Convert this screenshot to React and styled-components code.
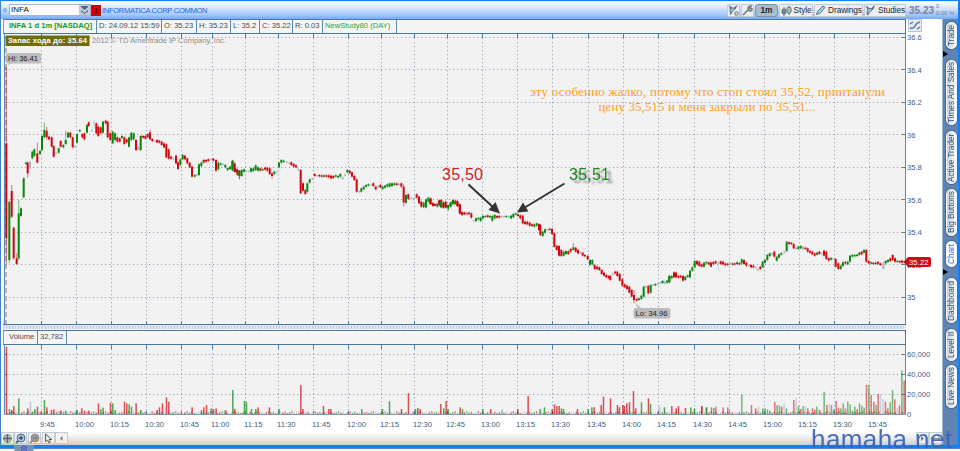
import React from 'react'
import styled, { createGlobalStyle } from 'styled-components'

const GlobalStyle = createGlobalStyle`
    * {
        box-sizing: border-box;
    }
    body {
        margin: 0;
        background: #fff;
        font-family: "Liberation Sans", Arial, sans-serif;
        font-size: 7.6px;
        color: #4a4a4a;
        overflow: hidden;
    }
`

const Window = styled.div`
    position: relative;
    display: flex;
    flex-direction: column;
    width: 960px;
    height: 451px;
    overflow: hidden;
`

const Frame = styled.div`
    display: flex;
    flex-direction: column;
    height: 448px;
    border: solid #0f80f8;
    border-width: 1px 2px 3px 1px;
    border-left-color: #3f7fd0;
`

const TopBar = styled.div`
    display: flex;
    align-items: center;
    height: 18px;
    padding-left: 2px;
    background: linear-gradient(#d6ebff 0, #fafcff 8%, #d5e5fd 40%, #a6c9fb 75%, #75abf8 100%);
`

const LinkDot = styled.span`
    width: 4px;
    height: 4px;
    margin-right: 2px;
    border: 1px solid #5aa0ee;
    border-radius: 50%;
`

const SymbolInput = styled.div`
    display: flex;
    justify-content: space-between;
    width: 82px;
    height: 12px;
    padding-left: 1px;
    border: 1px solid #a9b5c4;
    background: #fbfbfb;
    color: #111;
    font-size: 8px;
    line-height: 10px;
`

const DropIcon = styled.svg`
    width: 11px;
    height: 10px;
    background: #c3ccd6;
`

const LinkBadge = styled.span`
    width: 10px;
    height: 11px;
    background: #d80008;
    border: 1px solid #9d1a1a;
    color: #3d0000;
    text-align: center;
    line-height: 9px;
`

const CompanyName = styled.span`
    flex: 1;
    padding-left: 1px;
    color: #1264e6;
    font-size: 7.6px;
    letter-spacing: -0.33px;
`

const ToolButton = styled.div`
    display: flex;
    align-items: center;
    justify-content: center;
    gap: 2px;
    width: ${props => props.$width}px;
    height: 13px;
    margin-right: 1px;
    border: 1px solid #c3c9d2;
    background: ${props => (props.$pressed ? '#a9bccb' : '#eceef1')};
    border-radius: ${props => (props.$pressed ? '3px' : '1px')};
    border-color: ${props => (props.$pressed ? '#7d94a8' : '#c3c9d2')};
    color: #202830;
    font-size: 8.3px;
    font-weight: ${props => (props.$pressed ? 'bold' : 'normal')};
    letter-spacing: -0.1px;
    white-space: nowrap;
`

const LastPrice = styled.span`
    width: 29px;
    padding-left: 2px;
    color: #76839a;
    font-size: 10px;
    font-weight: bold;
`

const Change = styled.div`
    width: 22px;
    color: #6f7f98;
    font-size: 6px;
    line-height: 7px;
    white-space: nowrap;
`

const Body = styled.div`
    display: flex;
    flex: 1;
    min-height: 0;
`

const Main = styled.div`
    display: flex;
    flex-direction: column;
    width: 941px;
    padding-left: 2px;
    background: #fff;
`

const StudyBar = styled.div`
    display: flex;
    align-items: center;
    width: 903px;
    height: ${props => props.$height}px;
    border: 1px solid #4b79a3;
    border-left-color: #7fa0bd;
    background: #f5f5f5;
`

const StudyRow = styled.div`
    display: flex;
    justify-content: space-between;
    height: ${props => props.$height}px;
`

const StudyCell = styled.span`
    width: ${props => props.$width}px;
    height: 100%;
    padding-left: ${props => props.$pad || 2}px;
    border-right: 1px solid #5c87ae;
    color: ${props => props.$color || '#4c4c4c'};
    font-weight: ${props => (props.$bold ? 'bold' : 'normal')};
    line-height: 12px;
    white-space: nowrap;
`

const ScaleButton = styled.div`
    width: 14px;
    height: 13px;
    margin-right: 20px;
    border: 1px solid #b7c4d3;
    background: #e6ebf1;
`

const ChartSvg = styled.svg`
    display: block;
    width: 939px;
    height: ${props => props.$height}px;
    flex: none;
    font-size: 7.6px;
`

const ShadowText = styled.text`
    filter: drop-shadow(4px 3px 1px rgba(70, 70, 70, 0.6));
`

const Splitter = styled.div`
    width: 903px;
    height: 5px;
    border-top: 1px solid #dfe6f1;
    background: repeating-linear-gradient(90deg, #b9c7dc 0 1px, #e1e8f3 1px 3px);
    border-bottom: 1px solid #f3f5f9;
`

const BottomBar = styled.div`
    display: flex;
    flex: 1;
    margin-left: -2px;
    background: linear-gradient(#fff, #ececec 45%, #cfcfcf);
`

const BottomButton = styled.div`
    display: flex;
    align-items: center;
    justify-content: center;
    width: 13px;
    height: 12px;
    margin-right: ${props => props.$gap || 0}px;
    border: 1px solid #c2ccd9;
    background: #f0f1f2;
`

const Spacer = styled.div`
    flex: 1;
`

const SideBar = styled.div`
    display: flex;
    flex-direction: column;
    align-items: flex-end;
    width: 16px;
    padding: 3px 1px 0 0;
    background: #5f84b3;
    border-left: 1px solid #a9b9cc;
`

const SideTab = styled.div`
    display: flex;
    align-items: center;
    justify-content: center;
    flex: none;
    width: 11px;
    height: ${props => props.$height}px;
    margin-bottom: ${props => props.$gap}px;
    border: 1px solid #f5f6f8;
    border-radius: 5px;
    background: linear-gradient(90deg, ${props => (props.$active ? '#fff, #fff' : '#fbfbfb, #cdd1d6')});
    box-shadow: 0 0 0 1px #46698f;
    color: ${props => (props.$active ? '#2f6fe0' : '#2d5378')};
    font-size: 8.2px;
    line-height: 9px;
    writing-mode: vertical-rl;
    transform: rotate(180deg);
    white-space: nowrap;
`

const SideArrow = styled.div`
    align-self: flex-start;
    height: 6px;
    margin: 2px 0 3px;
    border: solid transparent;
    border-width: 3px 0 3px 5px;
    border-left-color: #000;
`

const BottomEdge = styled.div`
    height: 3px;
    background: linear-gradient(#5f86bd 0 1px, #f4f7fb 1px);
`

const PullTab = styled.div`
    position: absolute;
    left: 14px;
    bottom: 0;
    display: flex;
    justify-content: center;
    width: 20px;
    height: 6px;
    background: #7790b4;
    border-radius: 0 0 2px 2px;
`

const Watermark = styled.div`
    position: absolute;
    left: 811px;
    top: 424px;
    color: #3d61b8;
    opacity: 0.92;
    font-size: 26px;
    line-height: 30px;
    letter-spacing: 0.42px;
`

const GRID_X = [41, 76, 111, 146, 181, 212, 245, 278, 313, 348, 381, 414, 447, 482, 517, 552, 588, 623, 658, 694, 729, 764, 799, 834, 869]
const TIMES = ['9:45', '10:00', '10:15', '10:30', '10:45', '11:00', '11:15', '11:30', '11:45', '12:00', '12:15', '12:30', '12:45', '13:00', '13:15', '13:30', '13:45', '14:00', '14:15', '14:30', '14:45', '15:00', '15:15', '15:30', '15:45']
const PRICES = [['36.6', 37], ['36.4', 69.5], ['36.2', 102], ['36', 134.5], ['35.8', 167], ['35.6', 199.5], ['35.4', 232], ['35.2', 264.5], ['35', 297]]
const VOLUMES = [['60,000', 354], ['40,000', 374], ['20,000', 394]]

const COLORS = { r: '#cf0810', g: '#0a870f', n: '#a9b4c1' }

// candle: color, x, body top, body bottom, [high, low]; units are thirds of a pixel
const CANDLES = [
    [0, 50, `r19 280 565 50 645,g28 455 630 455 640,r35 423 500 405 505,r41 533 625,r50 625 642 610 645,g56 490 625 450 630,g63 475 498,g71 385 442,g78 338 342,r83 338 370 335 382,n90 335 355,g97 305 325,g103 298 318,r112 310 338 278 340,g120 303 312,g126 258 300,g133 240 262 218 264,r140 242 262 230 268,r147 260 268,r155 262 290,r161 288 320,n168 308 311,g176 295 308,r182 273 290,g190 285 292,g197 270 282 242 285,g204 248 262,r211 248 262,r218 262 292,n225 289 292,g231 252 278,g239 240 244,r247 253 262,r253 250 268,g261 225 248,r266 217 228,n275 241 244,n282 217 220 208 235,r289 220 250,r295 230 258,r302 232 250,g309 215 248,r317 212 220,r323 215 262,r331 250 270,g338 245 280,g345 250 270,r352 262 275,r359 265 275,g366 258 264,r373 262 282,r380 268 277,g387 262 290,g394 248 270,g401 250 268,r408 270 300,n415 290 300,g422 258 300,r429 258 263,r436 258 266,r443 252 262,r450 247 268 239 270,r457 267 273,n464 273 276,r471 270 277,r478 272 278,r485 275 285,r492 280 292,r499 283 322,r506 298 326,r513 320 326,n520 325 329,r528 317 340,r534 337 357,g541 328 345,g548 315 328,r555 317 328,r562 325 340,r569 338 352,r576 350 380,g584 375 380,n590 372 378,g597 343 375,g604 338 348,r611 330 338,r618 330 335,r625 328 333,n632 327 330,r640 326 332,r648 330 362,g655 338 358,g662 340 344,n669 342 345,g676 345 352,g683 354 360,g690 350 357,g697 333 358,r704 340 365,r711 358 366,r718 362 378 360 387`],
    [230, 130, `g8 92 122,r15 115 125,r22 120 134,g28 122 138 120 148,g35 120 138,g42 118 125,n49 122 126,n57 122 125,g63 115 125,g70 115 123,g77 106 120,g84 112 122,r91 115 122,g98 117 121,r105 113 119,r112 113 122,r119 115 132,r126 130 138 127 147,g133 125 132,n140 125 128,g147 98 112,g154 90 98,g161 92 96,n170 95 98,n178 98 101,r184 97 105,r191 102 110,r198 106 112,n205 117 120,r212 120 190,r219 160 182,r226 180 192,g232 160 185,g239 148 158,n247 145 149,r254 132 138,n261 136 139,r268 135 139,r275 136 140,g282 136 140,r289 136 140,r296 136 142,r303 137 145,r310 138 144,g317 136 140,g324 138 142,g331 132 140,n338 142 147,n345 134 138,g352 120 127,r359 122 130,r366 127 140,r373 138 150,r380 148 185,n387 183 187,g394 175 185,g401 170 178,g408 165 170,g415 163 167,n422 163 166,r430 160 168,r437 170 178,n444 168 172,r451 165 172,g458 170 177,g465 167 173,g472 163 170,g479 160 170,g486 160 168,g493 160 165,r500 160 165,n507 161 165,r514 160 170,r521 170 218 163 229,g528 195 218,r535 193 207,n545 204 207,n553 203 206,r560 193 203,r567 200 220,r574 215 230,g581 218 232,g588 208 232,g595 203 215,r602 205 222,r609 220 228,n620 221 224,r627 213 222,r634 210 230,g641 217 232,g648 225 232,g655 228 235 225 243,g662 217 230,r669 210 220,r676 212 220,r683 217 228,r690 225 250,g697 248 255,r704 249 253,r711 249 253`],
    [430, 70, `r1 388 402,r8 400 405,r15 402 407,g22 402 410,r29 390 407,g33 393 412,r40 400 413,r47 395 412,g54 405 415,g61 400 408,g68 393 402,g75 395 402,r82 393 408,r89 403 430,r96 427 433,r103 428 432,n110 427 431,r117 428 432,r124 430 443,n131 451 454,g138 445 453,g145 444 448,g152 443 453,g159 438 445,g166 438 441,r173 436 441,g180 438 442,g187 438 452,g194 435 445,r201 438 443,r208 438 443,n215 438 442,n222 438 441,g229 438 441,n236 438 442,g243 437 445,g250 432 442,g257 430 434,r264 433 438,r271 436 445,r278 437 460,r285 455 462,r292 455 463,r299 458 467,r306 463 468,g313 463 470,g320 460 467,r327 462 480,r331 465 495,g338 485 498,g345 478 488,n352 477 481,r359 476 480,r366 477 492,r373 490 530,r380 527 540,r387 528 557,r394 540 558,g401 545 557,g408 543 552,r415 544 552,r422 537 545,g430 532 540 519 542,r437 533 545,r444 540 550,n451 546 550,r458 548 557,r465 555 559,r473 558 568,g480 570 585,g487 570 583,r494 585 597,r501 590 597,r508 592 600,r515 600 612,r522 608 617,r529 615 622,r536 618 625,r541 618 630,n548 611 615,r555 605 610,r562 605 618,r569 612 632,r577 628 647,r584 643 652,r591 647 657,r598 650 668,r605 660 680,r612 675 690 660 700,r620 687 692,g627 685 690,g634 677 687,g641 650 680,n648 648 652,r655 648 670,g662 645 668,n669 644 647,g676 642 646,n683 640 644,n690 638 641,g697 634 638,n704 636 639,g711 633 637,g718 618 635`],
    [660, 70, `g8 634 638,n15 638 641,g22 633 637,g28 618 637,g35 618 625,r42 607 622,r48 608 622,r55 617 623,r62 617 622,r69 618 632,g76 620 630,g83 616 621,g90 602 622,g97 592 602,g104 573 592,r111 573 583,r118 575 588,r125 583 590,g132 578 590,g139 576 580,r146 577 583,r153 578 590,r160 576 582,r167 574 580,n175 580 583 572 602,r182 574 582,r189 575 583,r196 580 586,r203 581 585,n210 580 583,g217 580 584,r224 580 584,g231 577 582,r238 579 583,g245 568 580,r252 570 582,r259 578 587,n266 585 588,r273 585 592,r280 587 592,n287 591 595,n294 597 601,r301 590 597,g308 575 592,g315 570 578,g322 555 570,g329 550 558,n336 550 554,r343 545 560,g350 560 572,g357 553 563,g364 549 554,n373 544 548,g380 515 543,r387 517 522,r394 518 522,r401 522 535,n408 534 537,g415 530 537,g422 528 535,n429 530 538,r436 533 537,r443 535 545,r450 543 548,r457 545 553,r464 550 557,g471 548 554,r478 545 552,n485 549 552,r492 542 557,r499 545 567,r506 565 572,g513 564 569,n520 565 569,r527 567 590,r535 580 597,g542 587 597,g549 577 588,r556 576 580,g563 575 583,g570 557 575,g577 555 560,g584 555 559,g591 554 558,g598 548 555,r605 545 553,g612 540 548,r619 540 575,r626 573 580,g633 577 581,r640 578 582,r647 578 582,r654 576 581,r661 580 585,n670 578 597,g677 573 580,g684 570 576,r691 565 573,r698 555 570,r705 565 575,g712 572 576,r719 573 577,r726 572 578,g733 574 578`],
]

// volume bar: color, x, height; units are thirds of a pixel
const BARS = [
    [0, 'r19 202,g28 15,r35 12,r41 24,g56 47,r83 17,n91 37,g97 7,g104 15,r112 22,g133 42,r140 20,r154 12,r161 14,r182 10,g197 10,g231 12,r245 17,r253 10,r266 10,r295 32,g302 14,g309 19,r331 34,g338 32,g345 12,r373 37,r380 32,g387 29,g394 22,r408 32,g422 12,r471 12,r478 20,r487 32,r499 50,r506 37,r576 20,g604 12,r611 20,r619 27,g633 17,r640 15,r648 17,r676 12,r704 15'],
    [230, 'g8 72,g43 39,g49 36,g64 15,g77 15,r84 20,r118 20,g147 15,r212 87,r218 15,r280 24,r296 15,r302 15,g395 15,g457 15,g478 38,r514 15,r535 62,g556 15,r563 18,r570 15,r632 30,g641 17,r648 39,g654 15,r690 20,g697 15,g758 15,r782 15,n816 15,r863 15,r894 54,g930 15,g943 20,r966 15,r973 29,r980 24,r987 24,g994 17,g1000 15,r1042 15,g1074 15,g1085 20,r1092 20,r1113 27,r1120 52,r1141 47,r1162 27,r1168 20,r1178 27,r1183 24,r1190 32,r1198 35,r1210 69,r1217 17,g1234 35,r1255 47,g1261 30,n1288 24,g1303 20,r1325 24,r1338 17,r1345 24,r1366 18,g1382 20,g1393 17,r1415 24,g1429 20'],
    [700, 'r5 22,g19 19,r34 20,g41 18,r47 22,r69 20,r83 20,n89 12,g125 58,r154 27,r167 17,n175 22,g188 17,g195 17,g202 14,g209 10,r224 36,g231 27,g238 25,r245 22,n252 32,g259 17,r281 42,n288 47,g295 24,r302 15,g309 24,n316 24,r323 17,r337 17,r344 13,g350 22,r358 13,g372 67,r380 27,n387 32,g394 27,g401 14,r408 39,r415 19,g422 17,g429 32,r436 17,g443 37,g450 29,g457 10,g464 22,r471 14,g478 32,g485 25,g492 19,r499 87,g506 87,r513 57,r521 37,g528 27,r534 60,n541 60,n549 45,r556 37,r563 17,g570 35,g577 72,r584 44,n591 18,r598 25,g605 130,r612 100'],
]

const parse = (text) => text.split(',').map(item => [item[0], ...item.slice(1).split(' ').map(Number)])

const Grid = ({ rows, top, bottom }) => (
    <g stroke="#86a5c2" strokeDasharray="1.2 2.8">
        {rows.map(([label, y]) => <line key={label} x1="5" x2="904" y1={Math.floor(y) + 0.5} y2={Math.floor(y) + 0.5} />)}
        {GRID_X.map(x => <line key={x} x1={x + 0.5} x2={x + 0.5} y1={top} y2={bottom} />)}
        <g stroke="#4f7ea8" strokeDasharray="none">
            {GRID_X.map(x => <line key={x} x1={x + 0.5} x2={x + 0.5} y1={top} y2={top + 4} />)}
            {GRID_X.map(x => <line key={x} x1={x + 0.5} x2={x + 0.5} y1={bottom - 3} y2={bottom} />)}
            {rows.map(([label, y]) => <path key={label} d={`M4 ${Math.floor(y) + 0.5}h3M902 ${Math.floor(y) + 0.5}h4`} />)}
        </g>
    </g>
)

const Candle = ({ data, left, top }) => {
    const [color, x, open, close, high = open - 3, low = close + 3] = data
    const cx = left + x / 3
    return (
        <g fill={COLORS[color]}>
            <rect x={cx - 0.5} y={top + high / 3} width="1.1" height={(low - high) / 3} opacity="0.5" />
            <rect x={cx - 1} y={top + open / 3} width="2" height={Math.max(1, (close - open) / 3)} />
        </g>
    )
}

const Arrow = ({ d, head }) => (
    <g stroke="#333" fill="#333">
        <path d={d} strokeWidth="2" />
        <path d={head} stroke="none" />
    </g>
)

const PriceChart = () => (
    <ChartSvg $height={291} viewBox="3 34 939 291">
        <rect x="3" y="34" width="903" height="291" fill="#f2f2f2" />
        <Grid rows={PRICES} top={34} bottom={324} />
        <path d="M4.5 34V325M905.5 34V325" stroke="#5f8ab0" />
        <path d="M3 324.5H906" stroke="#4a78a2" />
        <path d="M6 48V324" stroke="#b4b8bc" strokeWidth="2" strokeDasharray="5 3" />
        {CANDLES.map(([left, top, text]) => parse(text).map(data => (
            <Candle key={left + data[1]} data={data} left={left} top={top} />
        )))}

        <rect x="5.5" y="35.5" width="84" height="10.5" fill="#6d6d0c" />
        <text x="8" y="43.4" fill="#fff" fontWeight="bold" textLength="79">Запас хода до: 35.64</text>
        <text x="92" y="43.3" fill="#8c8c8c" textLength="134">2012 © TD Ameritrade IP Company, Inc.</text>
        <path d="M7 66l3-5h5z" fill="#c2c2c2" />
        <rect x="6" y="53" width="35" height="10.5" rx="2" fill="#bcbcbc" />
        <text x="8" y="61" fill="#222" textLength="30">Hi: 36.41</text>
        <path d="M635 303l3 6h5z" fill="#c2c2c2" />
        <rect x="633.5" y="308" width="37" height="10.5" rx="2" fill="#bcbcbc" />
        <text x="635.5" y="316" fill="#222" textLength="32">Lo: 34.96</text>

        <g fontSize="16">
            <text x="442" y="180" fill="#c9222b" textLength="41">35,50</text>
            <ShadowText x="569" y="180" fill="#178c1b" textLength="41">35,51</ShadowText>
        </g>
        <Arrow d="M468.5 184.5L494 208" head="M500 213.5L488.5 210L495.5 202z" />
        <Arrow d="M564.5 183.5L524 208" head="M517 212.5L523 202.5L528.5 211.5z" />
        <g fill="#ffa01e" fontSize="13" fontFamily="'Liberation Serif', serif">
            <text x="530" y="96" textLength="355">эту особенно жалко, потому что стоп стоял 35,52, принтанули</text>
            <text x="598.5" y="111" textLength="217">цену 35,515 и меня закрыли по 35,51...</text>
        </g>

        <g fill="#366087">
            {PRICES.map(([label, y]) => <text key={label} x="907" y={y + 3.2}>{label}</text>)}
        </g>
        <path d="M904 262l4-5h21q2 0 2 2v6q0 2-2 2h-21z" fill="#d00812" />
        <text x="909" y="264.8" fill="#fff" textLength="19.5">35.22</text>
    </ChartSvg>
)

const VolumeChart = () => (
    <ChartSvg $height={87} viewBox="3 345 939 87">
        <rect x="3" y="345" width="903" height="70" fill="#f2f2f2" />
        <Grid rows={VOLUMES} top={345} bottom={414} />
        {Array.from({ length: 385 }, (_, i) => (
            <rect key={i} x={7 + i * 2.33} y={413 - (i * 7 % 5) * 0.4} width="1.4" height="2" fill={COLORS['rgnrgrn'[i * 11 % 7]]} opacity="0.6" />
        ))}
        {BARS.map(([left, text]) => parse(text).map(([color, x, height]) => (
            <rect key={left + x} x={left + x / 3 - 0.6} y={414 - height / 3} width="1.5" height={height / 3} fill={COLORS[color]} opacity={left === 700 ? 0.55 : 0.7} />
        )))}
        <path d="M4.5 345V415M905.5 345V415" stroke="#5f8ab0" />
        <path d="M4 414.5H906" stroke="#7898b6" />
        <g fill="#366087">
            {VOLUMES.map(([label, y]) => <text key={label} x="907" y={y + 3.3}>{label}</text>)}
            <text x="907" y="417.3">0</text>
            {TIMES.map((label, i) => <text key={label} x={GRID_X[i] - 1} y="427">{label}</text>)}
        </g>
    </ChartSvg>
)

const ToolIcon = ({ kind }) => (
    <svg width="11" height="11" viewBox="0 0 11 11" fill="none" stroke="#4f7288">
        {kind === 'flask' && <g><path d="M2.500 3.500h6L4.500 7 3 10 2 9.500z" fill="#9fc2d2" /><path d="M1 1.500l3 2M9.500 1L7 3.500" strokeWidth="1.5" /></g>}
        {kind === 'add' && <g><path d="M2 3h6L4.500 6 2.500 9.500z" fill="#9fc2d2" /><path d="M1 1l2.500 2M9 1L6.500 3" strokeWidth="1.5" /><path d="M7 7h3v3H7z" stroke="#6f7f54" /></g>}
        {kind === 'wrench' && <path d="M1 10l6-6M6 4q0-3 3-3l-1 2 2 1q0 3-4 1" stroke="#6c8078" strokeWidth="1.7" />}
        {kind === 'style' && <g><path d="M3 2v9M8 1v9" stroke="#667" /><rect x="1" y="4" width="4" height="5" rx="1.500" fill="#6f8d88" /><rect x="6" y="2" width="4" height="6" rx="1.500" fill="#b5c49b" /></g>}
        {kind === 'pencil' && <path d="M1.500 9.500l1-3L8 1l2 1.500-5.500 6z" fill="#a8cfdc" />}
    </svg>
)

const BottomIcon = ({ kind }) => (
    <svg width="11" height="11" viewBox="0 0 11 11" stroke="#4b6577" fill="none">
        {kind === 'move' && <g><circle cx="5.500" cy="5.500" r="4" fill="#b9c6b4" strokeOpacity="0.5" /><path d="M5.500 1v9M1 5.500h9" strokeWidth="1.4" /></g>}
        {kind === 'zoom' && <g><path d="M1 10l3-3" strokeWidth="2" /><circle cx="6" cy="5" r="4" fill="#a9c8da" /><path d="M6 3v4M4 5h4" stroke="#2f5a88" strokeWidth="1.4" /></g>}
        {kind === 'zoomout' && <g stroke="#909090"><path d="M1 10l3-3" strokeWidth="2" /><circle cx="6" cy="5" r="4" fill="#999" /><path d="M4 5h4" stroke="#777" /></g>}
        {kind === 'cursor' && <path d="M2.500 1v8l2-2 1.500 3 1.500-1-1.500-2.500h3z" fill="#e8f0d8" />}
        {kind === 'left' && <path d="M6.500 3v5L4 5.500z" fill="#777" stroke="none" />}
        {kind === 'right' && <path d="M4 3v5l3-2.500z" fill="#777" stroke="none" />}
        {kind === 'fit' && <path d="M1 5.500h9M3 3L1 5.500 3 8m5-5l2 2.500L8 8" stroke="#8b9862" />}
    </svg>
)

const App = () => {
    return (
        <Window>
            <GlobalStyle />
            <Frame>
                <TopBar>
                    <LinkDot />
                    <SymbolInput>
                        INFA
                        <DropIcon viewBox="0 0 11 10">
                            <path d="M2 1h7v1L5.500 5 2 2zM2 5l3.500 3L9 5v1.500L5.500 9 2 6.500z" fill="#456a8c" />
                        </DropIcon>
                    </SymbolInput>
                    <LinkBadge>1</LinkBadge>
                    <CompanyName>INFORMATICA CORP COMMON</CompanyName>
                    <ToolButton $width={13}><ToolIcon kind="add" /></ToolButton>
                    <ToolButton $width={13}><ToolIcon kind="wrench" /></ToolButton>
                    <ToolButton $width={23} $pressed>1m</ToolButton>
                    <ToolButton $width={34}><ToolIcon kind="style" />Style</ToolButton>
                    <ToolButton $width={49}><ToolIcon kind="pencil" />Drawings</ToolButton>
                    <ToolButton $width={42}><ToolIcon kind="flask" />Studies</ToolButton>
                    <LastPrice>35.23</LastPrice>
                    <Change>0<br />0.00 %</Change>
                </TopBar>
                <Body>
                    <Main>
                        <StudyRow $height={15}>
                            <StudyBar $height={15}>
                                <StudyCell $width={93} $pad={5} $color="#149a20" $bold>INFA 1 d 1m [NASDAQ]</StudyCell>
                                <StudyCell $width={65}>D: 24.09.12 15:59</StudyCell>
                                <StudyCell $width={35}>O: 35.23</StudyCell>
                                <StudyCell $width={34}>H: 35.23</StudyCell>
                                <StudyCell $width={29}>L: 35.2</StudyCell>
                                <StudyCell $width={33}>C: 35.22</StudyCell>
                                <StudyCell $width={30}>R: 0.03</StudyCell>
                                <StudyCell $width={74} $color="#2fa035">NewStudy80 (DAY)</StudyCell>
                            </StudyBar>
                            <ScaleButton>
                                <svg width="12" height="11" viewBox="0 0 12 11">
                                    <path d="M1 8q4 1 5-2t5-4M1 4l3-2M8 9l3-2" stroke="#4c7ea0" strokeWidth="1.4" fill="none" />
                                </svg>
                            </ScaleButton>
                        </StudyRow>
                        <PriceChart />
                        <Splitter />
                        <StudyBar $height={15}>
                            <StudyCell $width={34} $pad={5}>Volume</StudyCell>
                            <StudyCell $width={29}>32,782</StudyCell>
                        </StudyBar>
                        <VolumeChart />
                        <BottomBar>
                            <BottomButton><BottomIcon kind="move" /></BottomButton>
                            <BottomButton $gap={1}><BottomIcon kind="zoom" /></BottomButton>
                            <BottomButton $gap={1}><BottomIcon kind="zoomout" /></BottomButton>
                            <BottomButton><BottomIcon kind="cursor" /></BottomButton>
                            <BottomButton><BottomIcon kind="left" /></BottomButton>
                            <Spacer />
                            <BottomButton><BottomIcon kind="right" /></BottomButton>
                            <BottomButton><BottomIcon kind="fit" /></BottomButton>
                        </BottomBar>
                    </Main>
                    <SideBar>
                        <SideTab $height={27} $gap={0}>Trade</SideTab>
                        <SideArrow />
                        <SideTab $height={65} $gap={6}>Times And Sales</SideTab>
                        <SideTab $height={53} $gap={5}>Active Trader</SideTab>
                        <SideTab $height={47} $gap={5}>Big Buttons</SideTab>
                        <SideTab $height={26} $gap={0} $active>Chart</SideTab>
                        <SideArrow />
                        <SideTab $height={45} $gap={6}>Dashboard</SideTab>
                        <SideTab $height={32} $gap={4}>Level II</SideTab>
                        <SideTab $height={43} $gap={0}>Live News</SideTab>
                    </SideBar>
                </Body>
            </Frame>
            <BottomEdge />
            <PullTab>
                <svg width="8" height="6" viewBox="0 0 8 6">
                    <path d="M1 3l3-2 3 2M1 5.500l3-2 3 2" stroke="#2b49e0" fill="none" />
                </svg>
            </PullTab>
            <Watermark>hamaha.net</Watermark>
        </Window>
    )
}

export default App
